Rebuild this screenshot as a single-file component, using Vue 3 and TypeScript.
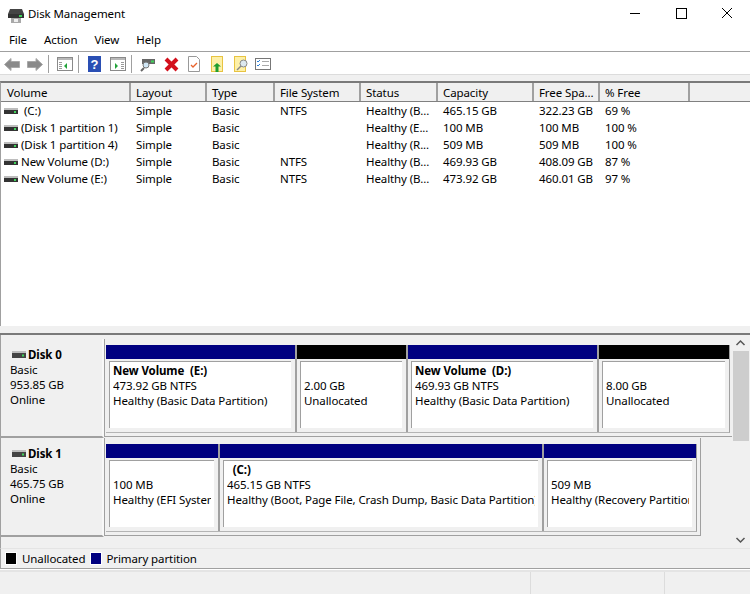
<script setup lang="ts">
const menus: string[] = ["File", "Action", "View", "Help"];

const columns = [
  { name: "Volume", width: 130 },
  { name: "Layout", width: 76 },
  { name: "Type", width: 68 },
  { name: "File System", width: 86 },
  { name: "Status", width: 77 },
  { name: "Capacity", width: 96 },
  { name: "Free Spa...", width: 66 },
  { name: "% Free", width: 90 },
];

const volumes: string[][] = [
  [" (C:)", "Simple", "Basic", "NTFS", "Healthy (B...", "465.15 GB", "322.23 GB", "69 %"],
  ["(Disk 1 partition 1)", "Simple", "Basic", "", "Healthy (E...", "100 MB", "100 MB", "100 %"],
  ["(Disk 1 partition 4)", "Simple", "Basic", "", "Healthy (R...", "509 MB", "509 MB", "100 %"],
  ["New Volume (D:)", "Simple", "Basic", "NTFS", "Healthy (B...", "469.93 GB", "408.09 GB", "87 %"],
  ["New Volume (E:)", "Simple", "Basic", "NTFS", "Healthy (B...", "473.92 GB", "460.01 GB", "97 %"],
];

const disks = [
  {
    name: "Disk 0",
    size: "953.85 GB",
    parts: [
      { width: 191, primary: true, title: "New Volume  (E:)", size: "473.92 GB NTFS", info: "Healthy (Basic Data Partition)" },
      { width: 111, primary: false, title: "", size: "2.00 GB", info: "Unallocated" },
      { width: 191, primary: true, title: "New Volume  (D:)", size: "469.93 GB NTFS", info: "Healthy (Basic Data Partition)" },
      { width: 130, primary: false, title: "", size: "8.00 GB", info: "Unallocated" },
    ],
  },
  {
    name: "Disk 1",
    size: "465.75 GB",
    parts: [
      { width: 114, primary: true, title: "", size: "100 MB", info: "Healthy (EFI System Partition)" },
      { width: 324, primary: true, title: "  (C:)", size: "465.15 GB NTFS", info: "Healthy (Boot, Page File, Crash Dump, Basic Data Partition)" },
      { width: 152, primary: true, title: "", size: "509 MB", info: "Healthy (Recovery Partition)" },
    ],
  },
];
</script>

<template>
  <div class="window">
    <header class="titlebar">
      <svg class="app-icon" width="18" height="18" viewBox="0 0 18 18">
        <path d="M3 3h12l2 5H1z" fill="#444" />
        <rect x="1" y="8" width="16" height="4" fill="#333" />
        <rect x="12" y="9" width="3" height="2" fill="#3fd35a" />
        <path d="M4 12h10v5H4z" fill="#a9a9a9" />
        <path d="M7 13h4v3H7z" fill="#eee" />
      </svg>
      <span class="title">Disk Management</span>
      <div class="controls">
        <svg width="46" height="29" viewBox="0 0 46 29"><path d="M18 13.5h10" stroke="#000" /></svg>
        <svg width="46" height="29" viewBox="0 0 46 29"><rect x="18.5" y="8.500" width="10" height="10" fill="none" stroke="#000" /></svg>
        <svg width="46" height="29" viewBox="0 0 46 29"><path d="M18 8l10 10M28 8L18 18" stroke="#000" /></svg>
      </div>
    </header>

    <nav class="menubar">
      <span v-for="m in menus" :key="m" class="menu">{{ m }}</span>
    </nav>

    <div class="toolbar">
      <svg width="16" height="13" viewBox="0 0 16 13"><path d="M.5 6.500L7 .5v3h8.500v6H7v3z" fill="#8a8a8a" stroke="#a8a8a8" /></svg>
      <svg class="next" width="16" height="13" viewBox="0 0 16 13"><path d="M15.500 6.500L9 .5v3H.5v6H9v3z" fill="#8a8a8a" stroke="#a8a8a8" /></svg>
      <i class="sep"></i>
      <svg width="16" height="14" viewBox="0 0 16 14">
        <rect x=".5" y=".5" width="15" height="13" fill="#fff" stroke="#8a8a8a" />
        <rect x="1" y="1" width="14" height="2" fill="#b8b8b8" />
        <path d="M2 5h3v1H2zM2 7h3v1H2zM2 9h3v1H2zM2 11h3v1H2z" fill="#999" />
        <path d="M10 6v6L7 9z" fill="#22a33a" />
      </svg>
      <i class="sep"></i>
      <svg class="help" width="13" height="16" viewBox="0 0 13 16">
        <rect width="13" height="16" fill="#2a4fb4" />
        <text x="6.500" y="13" text-anchor="middle" fill="#fff" font-size="13" font-weight="700" font-family="Liberation Sans">?</text>
      </svg>
      <svg class="pane" width="16" height="14" viewBox="0 0 16 14">
        <rect x=".5" y=".5" width="15" height="13" fill="#fff" stroke="#8a8a8a" />
        <rect x="1" y="1" width="14" height="2" fill="#b8b8b8" />
        <path d="M11 5h3v1h-3zM11 7h3v1h-3zM11 9h3v1h-3zM11 11h3v1h-3z" fill="#999" />
        <path d="M5 6v6l3-3z" fill="#22a33a" />
      </svg>
      <i class="sep"></i>
      <svg width="15" height="15" viewBox="0 0 15 15">
        <rect x="2" y="2" width="13" height="5" fill="#666" />
        <rect x="11" y="3.500" width="3" height="2" fill="#3fd35a" />
        <path d="M1 14l3-3" stroke="#666" stroke-width="2" />
        <circle cx="6" cy="8" r="3" fill="#cfe6f5" stroke="#777" />
      </svg>
      <svg class="delete" width="15" height="15" viewBox="0 0 15 15"><path d="M2 2l11 11M13 2L2 13" stroke="#d3101c" stroke-width="4" /></svg>
      <svg class="props" width="12" height="16" viewBox="0 0 12 16">
        <path d="M.5.500h8l3 3v12H.5z" fill="#fff" stroke="#999" />
        <path d="M3 9l2 2 4-4" fill="none" stroke="#e8622c" stroke-width="1.300" />
      </svg>
      <svg class="folder" width="12" height="16" viewBox="0 0 12 16">
        <rect x=".5" y=".5" width="11" height="15" fill="#fdf0a8" stroke="#e8c341" />
        <path d="M8 7l4 3.500H9.500V16h-3v-5.500H4z" transform="translate(-2 0)" fill="#1f9e2e" />
      </svg>
      <svg class="find" width="15" height="16" viewBox="0 0 15 16">
        <rect x=".5" y=".5" width="11" height="15" fill="#fdf0a8" stroke="#e8c341" />
        <circle cx="9.500" cy="7.500" r="3.500" fill="#dce8f0" stroke="#888" />
        <path d="M7 10l-4 4" stroke="#888" stroke-width="1.500" />
      </svg>
      <svg class="opts" width="16" height="12" viewBox="0 0 16 12">
        <rect x=".5" y=".5" width="15" height="11" fill="#fff" stroke="#777" />
        <path d="M2 3l1 1 2-2M2 7l1 1 2-2" fill="none" stroke="#2a7fd8" />
        <path d="M7 3.500h7M7 7.500h7" stroke="#aaa" />
      </svg>
    </div>

    <div class="band"></div>

    <section class="list">
      <div class="list-head">
        <span v-for="c in columns" :key="c.name" class="head-cell" :style="{ width: c.width + 'px' }">{{ c.name }}</span>
      </div>
      <div v-for="row in volumes" :key="row[0]" class="list-row">
        <span v-for="(cell, i) in row" :key="i" class="cell" :class="{ first: i === 0 }" :style="{ width: columns[i].width + 'px' }">
          <svg v-if="i === 0" class="vol-icon" width="14" height="6" viewBox="0 0 14 6">
            <rect width="14" height="2" fill="#bdbdbd" />
            <rect y="2" width="14" height="4" fill="#333" />
            <rect x="10" y="3" width="2" height="2" fill="#3fd35a" />
          </svg>{{ cell }}
        </span>
      </div>
    </section>

    <div class="splitter"></div>

    <section class="graph">
      <div class="disks">
        <div v-for="d in disks" :key="d.name" class="disk">
          <div class="disk-label">
            <div class="disk-name">
              <svg width="14" height="7" viewBox="0 0 14 7">
                <rect width="14" height="2" fill="#bdbdbd" />
                <rect y="2" width="14" height="5" fill="#444" />
                <rect x="10" y="3.500" width="2" height="2" fill="#3fd35a" />
              </svg>
              <b>{{ d.name }}</b>
            </div>
            <div>Basic</div>
            <div>{{ d.size }}</div>
            <div>Online</div>
          </div>
          <div class="parts">
            <div class="part-row">
              <div v-for="p in d.parts" :key="p.size + p.info" class="part" :style="{ width: p.width + 'px' }">
                <div class="bar" :class="{ primary: p.primary }"></div>
                <div class="box">
                  <div class="line bold">{{ p.title }}</div>
                  <div class="line">{{ p.size }}</div>
                  <div class="line">{{ p.info }}</div>
                </div>
              </div>
            </div>
          </div>
        </div>
      </div>
      <div class="scrollbar">
        <svg width="17" height="16" viewBox="0 0 17 16"><path d="M4.500 10l4-4 4 4" fill="none" stroke="#555" stroke-width="1.500" /></svg>
        <div class="track"><div class="thumb"></div></div>
        <svg width="17" height="16" viewBox="0 0 17 16"><path d="M4.500 6l4 4 4-4" fill="none" stroke="#555" stroke-width="1.500" /></svg>
      </div>
    </section>

    <div class="legend">
      <i class="swatch black"></i><span>Unallocated</span>
      <i class="swatch blue"></i><span>Primary partition</span>
    </div>

    <footer class="statusbar">
      <i></i><i></i><i></i>
    </footer>
  </div>
</template>

<style>
html, body { margin: 0; background: #fff; }
</style>

<style scoped>
.window {
  width: 750px;
  height: 594px;
  overflow: hidden;
  display: flex;
  flex-direction: column;
  font: 11.5px/15px "Noto Sans", sans-serif;
  letter-spacing: -0.1px;
  color: #000;
  background: #fff;
}

.titlebar {
  height: 29px;
  flex: none;
  display: flex;
  align-items: center;
  padding-left: 7px;
}
.title { margin: 0 0 2px 3px; }
.controls { margin-left: auto; display: flex; }

.menubar {
  height: 23px;
  flex: none;
  box-sizing: border-box;
  display: flex;
  align-items: center;
  padding: 0 0 2px 9px;
  gap: 17px;
  border-bottom: 1px solid #a0a0a0;
}

.toolbar {
  height: 22px;
  flex: none;
  box-sizing: border-box;
  padding: 2px 0 0 4px;
  display: flex;
  align-items: center;
}
.next { margin-left: 7px; }
.sep { width: 1px; height: 18px; background: #a0a0a0; margin: 0 8px 0 5px; }
.help { margin-left: 1px; }
.pane { margin-left: 9px; }
.delete { margin-left: 9px; }
.props { margin-left: 9px; }
.folder { margin-left: 11px; }
.find { margin-left: 11px; }
.opts { margin-left: 6px; }

.band {
  height: 7px;
  flex: none;
  background: #f0f0f0;
  border-top: 1px solid #dcdcdc;
  box-sizing: border-box;
}

.list {
  height: 245px;
  flex: none;
  box-sizing: border-box;
  border-top: 2px solid #7a7a7a;
  border-left: 1px solid #a0a0a0;
  background: #fff;
}
.list-head {
  display: flex;
  height: 18px;
  background: #f0f0f0;
  border-bottom: 1px solid #808080;
}
.head-cell {
  box-sizing: border-box;
  padding-left: 5px;
  line-height: 19px;
  border-right: 2px solid #a0a0a0;
  white-space: nowrap;
}
.head-cell:first-child { padding-left: 6px; }
.list-row { display: flex; height: 17px; }
.cell {
  box-sizing: border-box;
  padding-left: 5px;
  line-height: 17px;
  white-space: pre;
  overflow: hidden;
}
.cell.first { padding-left: 3px; }
.vol-icon { margin-right: 3px; vertical-align: 1px; }

.splitter {
  height: 7px;
  flex: none;
  background: #f0f0f0;
  border-bottom: 2px solid #7a7a7a;
}

.graph {
  flex: none;
  height: 214px;
  display: flex;
  background: #f0f0f0;
  border-left: 1px solid #a0a0a0;
  border-bottom: 1px solid #e4e4e4;
  box-sizing: border-box;
}
.disks { width: 731px; flex: none; padding-top: 4px; overflow: hidden; }
.disk { display: flex; }
.disk-label {
  width: 103px;
  flex: none;
  box-sizing: border-box;
  height: 99px;
  padding: 8px 0 0 9px;
  border-right: 2px solid #f8f8f8;
  border-bottom: 2px solid #a0a0a0;
  white-space: nowrap;
}
.disk-name { display: flex; align-items: center; gap: 2px; margin-left: 2px; }
.parts {
  flex: none;
  height: 98px;
  box-sizing: border-box;
  padding: 6px 3px 0 1px;
  border-left: 1px solid #a0a0a0;
  border-bottom: 1px solid #a0a0a0;
  border-right: 1px solid #a0a0a0;
}
.part-row {
  display: flex;
  border-right: 1px solid #a0a0a0;
  border-bottom: 1px solid #b4b4b4;
}
.part {
  box-sizing: border-box;
  border-right: 2px solid #a0a0a0;
}
.part:last-child { border-right: none; }
.bar { height: 14px; background: #000; }
.bar.primary { background: #000080; }
.box {
  height: 67px;
  margin: 2px 4px 4px 3px;
  padding: 1px 3px 0 3px;
  box-sizing: border-box;
  background: #fff;
  border-top: 1px solid #a0a0a0;
  border-left: 1px solid #a0a0a0;
}
.line { height: 15px; white-space: pre; overflow: hidden; }
.bold { font-weight: 700; }

.scrollbar {
  width: 18px;
  flex: none;
  display: flex;
  flex-direction: column;
}
.track { flex: 1; }
.thumb { height: 90px; width: 16px; margin-left: 1px; background: #cdcdcd; }

.legend {
  height: 20px;
  flex: none;
  box-sizing: border-box;
  display: flex;
  align-items: center;
  padding-left: 4px;
  background: #f0f0f0;
  border-left: 1px solid #a0a0a0;
  border-bottom: 1px solid #a0a0a0;
}
.swatch {
  width: 10px;
  height: 11px;
  border: 1px solid #fff;
  margin-right: 5px;
}
.black { background: #000; }
.blue { background: #000080; margin-left: 5px; margin-right: 4px; }

.statusbar {
  flex: 1;
  display: flex;
  background: #f0f0f0;
  border-top: 2px solid #e4e4e4;
  margin-top: 1px;
}
.statusbar i { border-right: 1px solid #dcdcdc; }
.statusbar i:nth-child(1) { width: 530px; }
.statusbar i:nth-child(2) { width: 133px; }
.statusbar i:nth-child(3) { flex: 1; border-right: none; }
</style>
